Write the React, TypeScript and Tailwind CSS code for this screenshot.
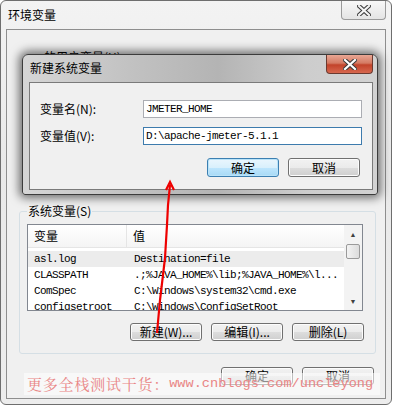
import React from "react";

const cjk = "font-['Noto_Sans_CJK_SC',sans-serif]";
const mono = "font-['Liberation_Mono','Noto_Sans_CJK_SC',monospace]";

const WinButton = ({
  children,
  def = false,
  w = "w-[72px]",
  h = "h-[18px]",
}: {
  children: React.ReactNode;
  def?: boolean;
  w?: string;
  h?: string;
}) => (
  <div
    className={`${w} ${h} flex items-center justify-center rounded-[3px] border text-[12px] leading-none text-black ${cjk} ${
      def
        ? "border-[#3c7fb1] bg-[linear-gradient(#eaf6fd_0%,#d9f0fc_50%,#bee6fd_51%,#a7d9f5_100%)] shadow-[inset_0_0_0_1px_#b9e3f9]"
        : "border-[#707070] bg-[linear-gradient(#f2f2f2_0%,#ebebeb_50%,#dddddd_51%,#cfcfcf_100%)] shadow-[inset_0_0_0_1px_#fcfcfc]"
    }`}
  >
    {children}
  </div>
);

const CloseX = ({ color }: { color: string }) => (
  <svg width="14" height="11" viewBox="0 0 14 11">
    <path
      d="M2 1 L12 10 M12 1 L2 10"
      stroke="#3a3a3a"
      strokeWidth="4.2"
      strokeLinecap="square"
    />
    <path
      d="M2 1 L12 10 M12 1 L2 10"
      stroke={color}
      strokeWidth="2.2"
      strokeLinecap="square"
    />
  </svg>
);

const rows = [
  ["asl.log", "Destination=file"],
  ["CLASSPATH", ".;%JAVA_HOME%\\lib;%JAVA_HOME%\\l..."],
  ["ComSpec", "C:\\Windows\\system32\\cmd.exe"],
  ["configsetroot", "C:\\Windows\\ConfigSetRoot"],
];

const NewVarDialog = () => (
  <div className="absolute left-[22px] top-[54px] flex h-[141px] w-[356px] flex-col rounded-t-[6px] rounded-b-[3px] border border-[#3c3c3c] bg-[linear-gradient(90deg,#d6d6d6_0%,#c2c2c2_30%,#b4b4b4_55%,#cdcdcd_80%,#d2d2d2_100%)] shadow-[0_0_10px_3px_rgba(0,0,0,0.55)]">
    <div className="flex h-[27px] items-start justify-between">
      <span className={`pl-[7px] pt-[6px] text-[12px] leading-[14px] text-black ${cjk}`}>
        新建系统变量
      </span>
      <div className="mr-[4px] flex h-[19px] w-[47px] items-center justify-center rounded-b-[4px] border border-t-0 border-[#6b3a30] bg-[linear-gradient(#e9a794_0%,#d47a63_45%,#c2432a_55%,#d7684f_100%)]">
        <CloseX color="#ffffff" />
      </div>
    </div>
    <div className="ml-[6px] flex h-[108px] w-[344px] flex-col border border-[#7a7a7a] bg-[#f0f0f0] pt-[17px]">
      <div className="flex items-center pl-[10px]">
        <span className={`w-[103px] text-[12px] text-black ${cjk}`}>
          变量名(N):
        </span>
        <div
          className={`flex h-[18px] w-[219px] items-center border border-[#abadb3] bg-white pl-[2px] text-[11px] tracking-[-0.6px] text-black ${mono}`}
        >
          JMETER_HOME
        </div>
      </div>
      <div className="mt-[9px] flex items-center pl-[10px]">
        <span className={`w-[103px] text-[12px] text-black ${cjk}`}>
          变量值(V):
        </span>
        <div
          className={`flex h-[18px] w-[219px] items-center border border-[#3d7bad] bg-white pl-[2px] text-[11px] tracking-[-0.6px] text-black ${mono}`}
        >
          D:\apache-jmeter-5.1.1
        </div>
      </div>
      <div className="mt-[13px] flex justify-end gap-[9px] pr-[12px]">
        <WinButton def h="h-[19px]">
          确定
        </WinButton>
        <WinButton h="h-[19px]">取消</WinButton>
      </div>
    </div>
  </div>
);

const VarList = () => (
  <div className="flex h-[87px] w-[336px] border border-[#828790] bg-white">
    <div className="flex flex-1 flex-col overflow-hidden">
      <div
        className={`flex h-[23px] shrink-0 items-center border-b border-[#e5e5e5] bg-[linear-gradient(#ffffff,#f4f4f4)] text-[12px] text-black ${cjk}`}
      >
        <span className="w-[99px] border-r border-[#e5e5e5] pl-[6px] leading-[22px]">
          变量
        </span>
        <span className="pl-[6px]">值</span>
      </div>
      <div className={`flex flex-col text-[11px] tracking-[-0.6px] text-black ${mono}`}>
        {rows.map(([k, v], i) => (
          <div
            key={k}
            className={`flex h-[16px] shrink-0 items-center whitespace-nowrap ${
              i === 0 ? "mt-[3px] bg-[#ececec]" : ""
            }`}
          >
            <span className="w-[100px] pl-[6px]">{k}</span>
            <span className="pl-[6px]">{v}</span>
          </div>
        ))}
      </div>
    </div>
    <div className="flex w-[18px] flex-col items-center bg-[#f3f3f3] pt-[6px]">
      <span className="text-[7px] leading-none text-[#404040]">▲</span>
      <div className="mt-[6px] h-[15px] w-[14px] rounded-[2px] border border-[#9a9a9a] bg-[linear-gradient(90deg,#f3f3f3,#dcdcdc)]" />
      <div className="flex-1" />
      <span className="mb-[5px] text-[7px] leading-none text-[#404040]">▼</span>
    </div>
  </div>
);

export default function App() {
  return (
    <div className="relative h-[407px] w-[394px] overflow-hidden bg-white">
      <div className="flex h-[405px] w-[392px] flex-col rounded-[6px] border border-[#6e6e6e] bg-[linear-gradient(#f3f3f3,#e9e9e9_40%,#ededed)]">
        <div className="flex h-[28px] items-start justify-between">
          <span className={`pl-[7px] pt-[7px] text-[12px] leading-[14px] text-black ${cjk}`}>
            环境变量
          </span>
          <div className="mr-[5px] flex h-[19px] w-[45px] items-center justify-center rounded-b-[4px] border border-t-0 border-[#9a9a9a] bg-[linear-gradient(#f8f8f8,#e4e4e4)]">
            <CloseX color="#f4f4f4" />
          </div>
        </div>
        <div className="ml-[5px] flex h-[370px] w-[380px] flex-col border border-[#8e8e8e] bg-[#f0f0f0]">
          <div className="h-[174px] pl-[37px] pt-[14px]">
            <span className={`text-[12px] leading-[14px] text-black ${cjk}`}>
              的用户变量(U)
            </span>
          </div>
          <fieldset className="ml-[12px] w-[357px] rounded-[3px] border border-[#d5dfe5] pb-[12px] pl-[7px] pr-[11px]">
            <legend className={`px-[1px] text-[12px] leading-[14px] text-black ${cjk}`}>
              系统变量(S)
            </legend>
            <div className="mt-[6px]">
              <VarList />
            </div>
            <div className="mt-[12px] flex justify-end gap-[9px]">
              <WinButton>新建(W)...</WinButton>
              <WinButton>编辑(I)...</WinButton>
              <WinButton>删除(L)</WinButton>
            </div>
          </fieldset>
          <div className="mt-[13px] flex justify-end gap-[9px] pr-[11px]">
            <WinButton>确定</WinButton>
            <WinButton>取消</WinButton>
          </div>
        </div>
      </div>

      <NewVarDialog />

      <svg
        className="absolute left-0 top-0"
        width="394"
        height="407"
        viewBox="0 0 394 407"
      >
        <path
          d="M157 333 L160 300 L163 275 L165 258 L167 225 L168 205 L170 185"
          fill="none"
          stroke="#ee0000"
          strokeWidth="2.2"
        />
        <path
          d="M166 190 L170 182 L174 190"
          fill="none"
          stroke="#ee0000"
          strokeWidth="2.2"
        />
      </svg>

      <div className="absolute left-[24px] top-[373px] flex h-[22px] w-[356px] items-center bg-[rgba(255,255,255,0.55)] pl-[3px] text-[#e98585] whitespace-nowrap">
        <span className={`text-[15px] tracking-[0.8px] font-['Noto_Serif_CJK_SC','Noto_Sans_CJK_SC',serif]`}>
          更多全栈测试干货：
        </span>
        <span className="font-['Liberation_Mono',monospace] text-[13.6px]">
          www.cnblogs.com/uncleyong
        </span>
      </div>
    </div>
  );
}
